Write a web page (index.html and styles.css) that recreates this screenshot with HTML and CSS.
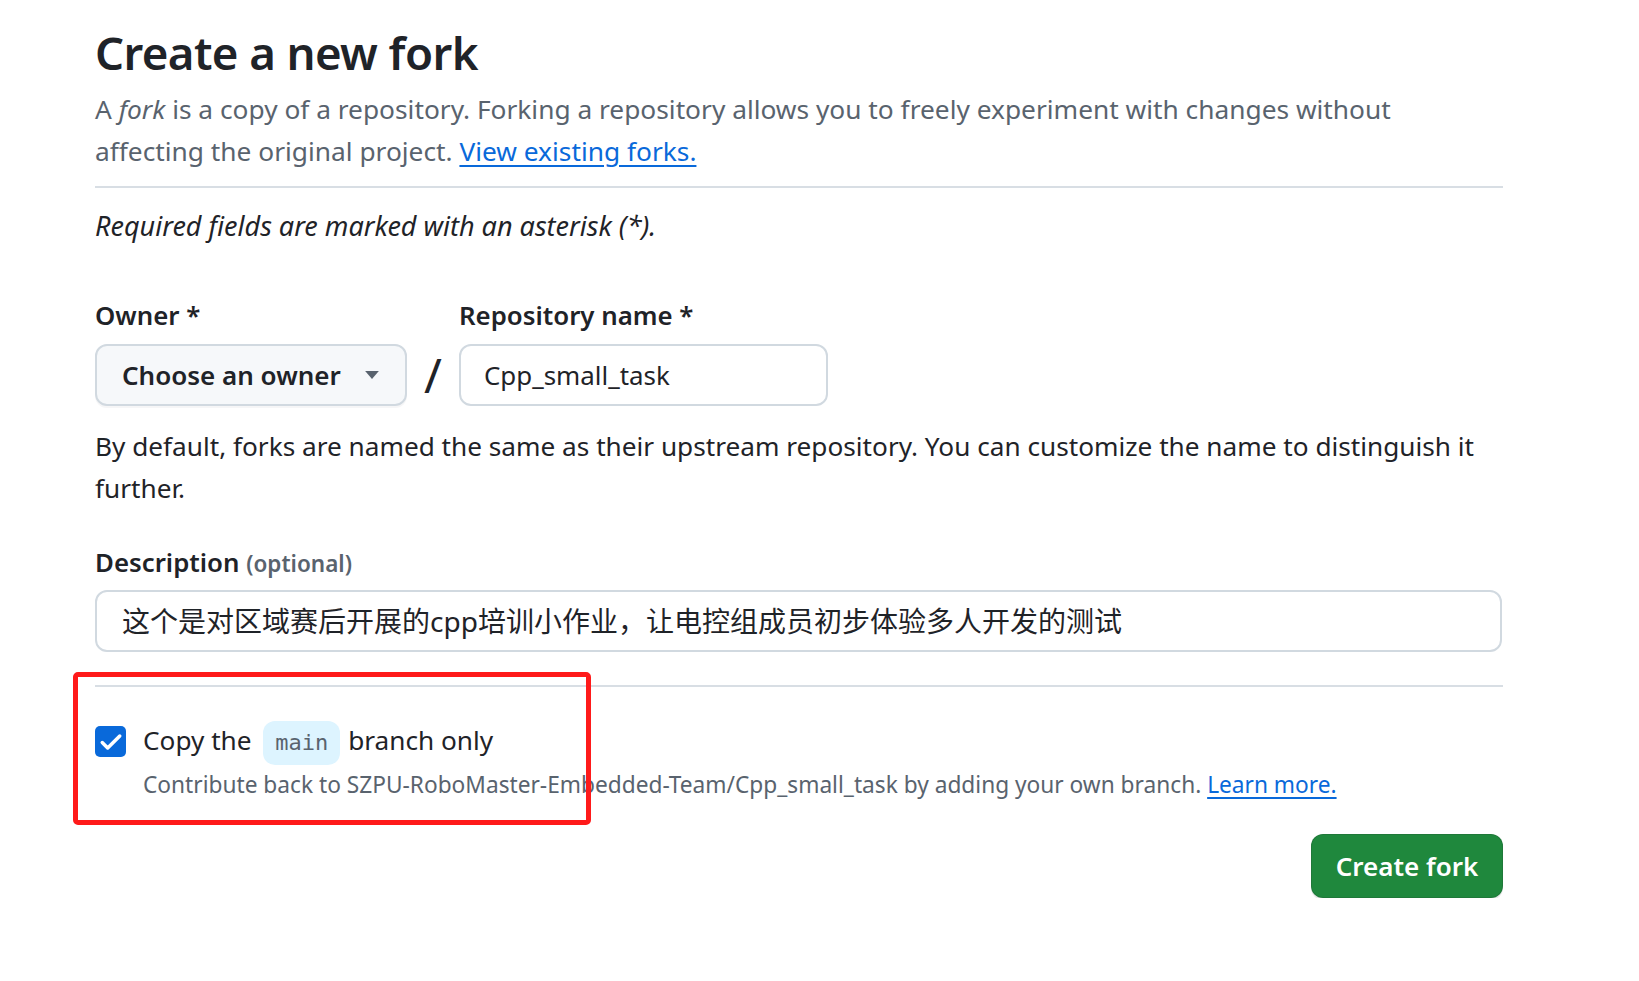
FILE: index.html
```html
<!DOCTYPE html>
<html lang="en">
<head>
<meta charset="utf-8">
<title>Create a new fork</title>
<link rel="stylesheet" href="styles.css">
</head>
<body>
<main class="page">
  <h1 class="title">Create a new fork</h1>
  <p class="lead">A <em>fork</em> is a copy of a repository. Forking a repository allows you to freely experiment with changes without affecting the original project. <a href="#" class="link">View existing forks.</a></p>
  <hr class="divider">
  <p class="note">Required fields are marked with an asterisk (*).</p>

  <div class="name-row">
    <div class="field">
      <span class="label">Owner *</span>
      <div class="select">
        <span>Choose an owner</span>
        <svg class="caret" viewBox="0 0 12 7" width="14" height="8"><path d="M0 0h12L6 7z" fill="#59636e"/></svg>
      </div>
    </div>
    <span class="slash">/</span>
    <div class="field">
      <span class="label">Repository name *</span>
      <div class="input repo-input">Cpp_small_task</div>
    </div>
  </div>

  <p class="hint">By default, forks are named the same as their upstream repository. You can customize the name to distinguish it further.</p>

  <div class="field desc-field">
    <span class="label">Description <span class="optional">(optional)</span></span>
    <div class="input desc-input">这个是对区域赛后开展的cpp培训小作业，让电控组成员初步体验多人开发的测试</div>
  </div>

  <hr class="divider divider-bottom">

  <div class="check-block">
    <div class="check-row">
      <span class="checkbox"><svg viewBox="0 0 16 16" width="28" height="28"><path d="M3 8.3l3.1 3.1L13 4.6" fill="none" stroke="#fff" stroke-width="2" stroke-linecap="round" stroke-linejoin="round"/></svg></span>
      <span class="check-label">Copy the <code class="branch">main</code> branch only</span>
    </div>
    <p class="check-hint">Contribute back to SZPU-RoboMaster-Embedded-Team/Cpp_small_task by adding your own branch. <a href="#" class="link">Learn more.</a></p>
  </div>

  <div class="actions">
    <button class="primary" type="button">Create fork</button>
  </div>

  <div class="highlight"></div>
</main>
</body>
</html>
```

FILE: styles.css
```css
* { box-sizing: border-box; }

html, body {
  margin: 0;
  padding: 0;
  background: #ffffff;
}

body {
  font-family: "Noto Sans", "Noto Sans CJK SC", sans-serif;
  color: #1f2328;
  font-size: 26px;
  line-height: 42px;
}

.page {
  position: relative;
  width: 1408px;
  margin-left: 95px;
  padding-top: 22px;
}

.title {
  margin: 0;
  font-size: 45.6px;
  line-height: 60px;
  font-weight: 600;
  letter-spacing: -0.6px;
}

.lead {
  margin: 6px 0 0;
  color: #59636e;
  font-size: 26.3px;
  line-height: 42px;
}

.link {
  color: #0969da;
  text-decoration: underline;
  text-underline-offset: 4px;
  text-decoration-thickness: 2px;
}

.divider {
  margin: 14px 0 0;
  border: 0;
  height: 2px;
  background: #d8dee4;
}

.note {
  margin: 17px 0 0;
  font-style: italic;
  font-size: 27px;
}

.name-row {
  display: flex;
  align-items: flex-end;
  margin-top: 47px;
}

.field {
  display: flex;
  flex-direction: column;
  gap: 8px;
}

.label {
  font-weight: 600;
  font-size: 25.8px;
  line-height: 42px;
}

.optional {
  font-weight: 600;
  font-size: 22.5px;
  color: #59636e;
}

.select {
  width: 312px;
  height: 62px;
  display: flex;
  align-items: center;
  justify-content: space-between;
  padding: 0 26px 0 25px;
  background: #f6f8fa;
  border: 2px solid #d1d9e0;
  border-radius: 12px;
  font-weight: 600;
  font-size: 26px;
  box-shadow: 0 2px 0 rgba(31, 35, 40, 0.04);
}

.slash {
  width: 52px;
  height: 62px;
  display: flex;
  align-items: center;
  justify-content: center;
  font-size: 48px;
  font-weight: 400;
}

.input {
  height: 62px;
  display: flex;
  align-items: center;
  border: 2px solid #d1d9e0;
  border-radius: 12px;
  background: #ffffff;
}

.repo-input {
  width: 369px;
  padding-left: 23px;
  font-size: 25.9px;
}

.hint {
  margin: 19px 0 0;
  font-size: 26.2px;
}

.desc-field {
  margin-top: 32px;
  gap: 5px;
}

.desc-input {
  width: 1407px;
  padding-left: 25px;
  font-size: 28px;
}

.divider-bottom {
  margin-top: 33px;
}

.check-block {
  margin-top: 32px;
}

.check-row {
  display: flex;
  align-items: center;
  gap: 17px;
}

.checkbox {
  width: 31px;
  height: 31px;
  border-radius: 5px;
  background: #0969da;
  display: flex;
  align-items: center;
  justify-content: center;
  flex: none;
}

.check-label {
  font-size: 26.2px;
}

.branch {
  display: inline-block;
  font-family: "DejaVu Sans Mono", "Liberation Mono", monospace;
  font-size: 22px;
  line-height: 44px;
  padding: 0 12px;
  margin: 0 1px 0 5px;
  background: #ddf4ff;
  color: #59636e;
  border-radius: 12px;
  vertical-align: middle;
}

.check-hint {
  margin: 2px 0 0 48px;
  font-size: 22.7px;
  line-height: 36px;
  color: #59636e;
}

.actions {
  display: flex;
  justify-content: flex-end;
  margin-top: 31px;
}

.primary {
  width: 192px;
  height: 64px;
  border: 1px solid rgba(31, 35, 40, 0.15);
  border-radius: 12px;
  background: #1f883d;
  color: #ffffff;
  font-family: "Noto Sans", sans-serif;
  font-size: 26px;
  font-weight: 600;
  box-shadow: 0 2px 0 rgba(31, 35, 40, 0.1);
}

.highlight {
  position: absolute;
  left: -22px;
  top: 672px;
  width: 518px;
  height: 153px;
  border: 5px solid #ff1a1a;
  border-radius: 5px;
  pointer-events: none;
}
```
